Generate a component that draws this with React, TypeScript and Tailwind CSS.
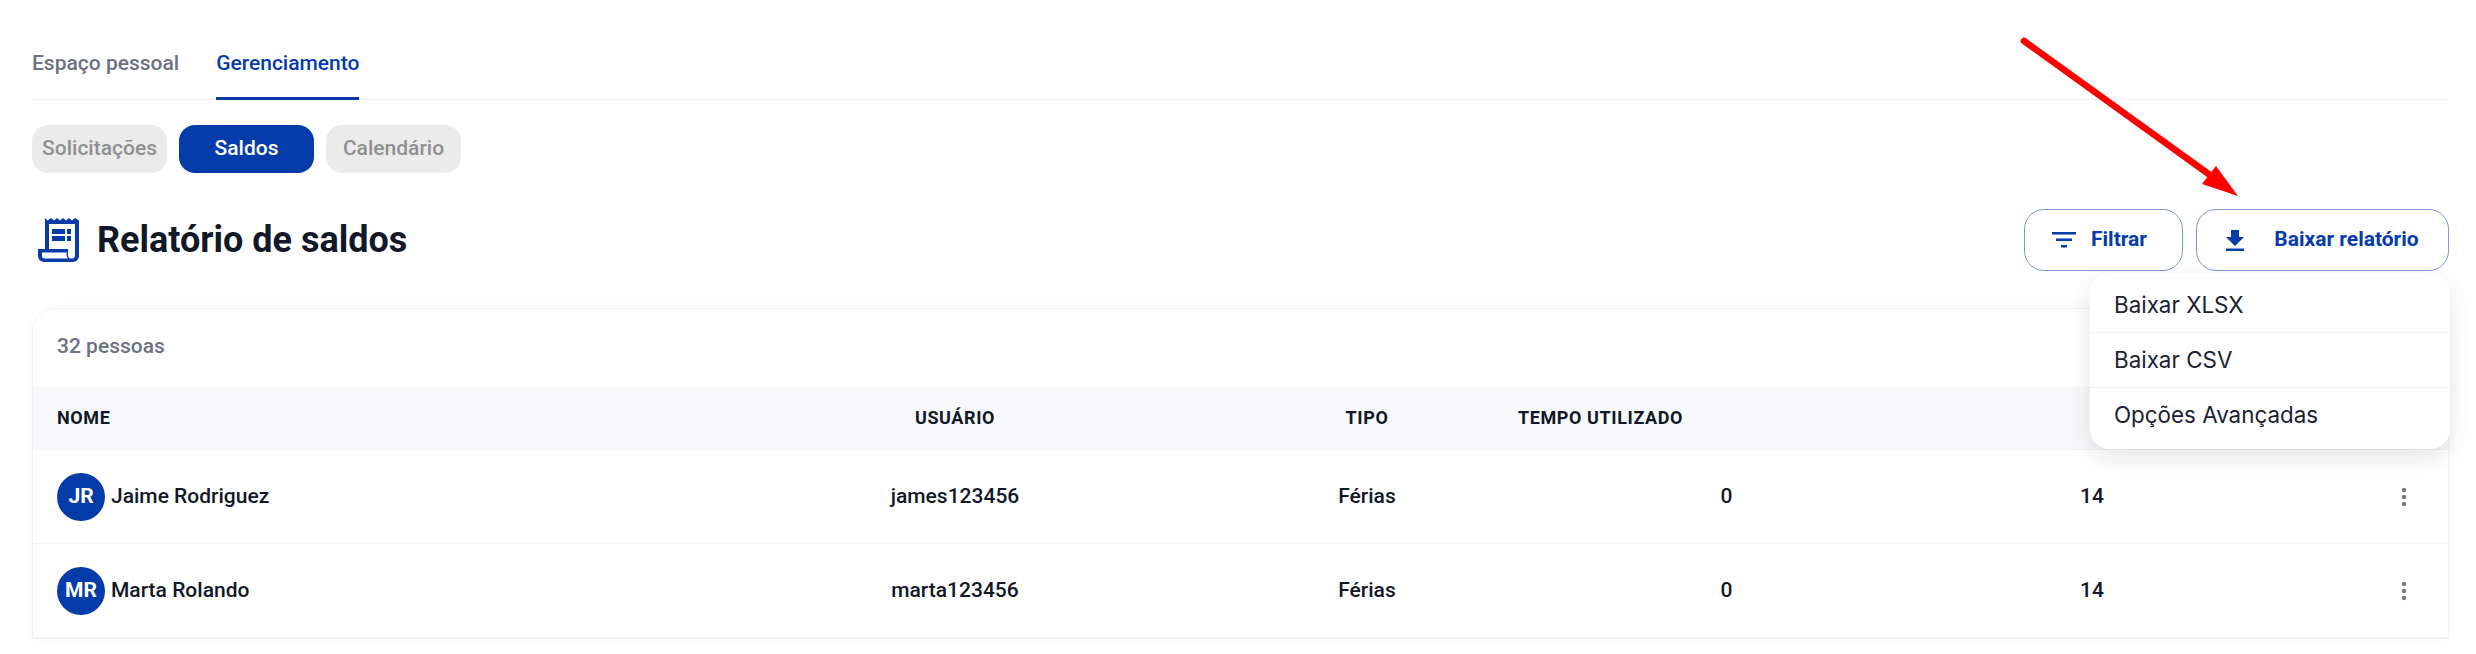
import { MoreVertical } from "lucide-react";

const rows = [
  { initials: "JR", name: "Jaime Rodriguez", user: "james123456", type: "Férias", used: "0", balance: "14" },
  { initials: "MR", name: "Marta Rolando", user: "marta123456", type: "Férias", used: "0", balance: "14" },
];

const gridCols = "grid grid-cols-[667px_510px_308px_414px_320px_1fr] items-center";

function ReportIcon() {
  return (
    <svg viewBox="0 0 41 44" className="w-[41px] h-11 text-[#063baa]" fill="currentColor">
      <path
        fillRule="evenodd"
        d="M7 0l2.700 2.500L13 0l3 2.500L19 0l3 2.500L25 0l3 2.500L31 0l3 2.500L37 0l4 2.500V38a6 6 0 0 1-6 6H6a6 6 0 0 1-6-6v-7h7V0zm4 6v25h19v7a3 3 0 0 0 3 2.500h1a3 3 0 0 0 3-2.500V6H11zM4 34.500V38a2.500 2.500 0 0 0 2.500 2.500H30a6 6 0 0 1-1-6H4z"
      />
      <rect x="14" y="11" width="13" height="5" />
      <rect x="29" y="11" width="4" height="5" />
      <rect x="14" y="18" width="13" height="5" />
      <rect x="29" y="18" width="4" height="5" />
    </svg>
  );
}

export default function App() {
  return (
    <div className="relative h-[654px] overflow-hidden bg-white font-['Roboto',sans-serif] text-[#111827]">
      <div className="pl-8 pr-[27px] pt-[40px]">
        <div className="flex gap-[37px] h-[60px] border-b border-[#f1f3f7]">
          <span className="text-[21px] leading-[46px] font-medium text-[#6b7280]">Espaço pessoal</span>
          <span className="text-[21px] leading-[46px] font-medium text-[#063baa] border-b-[3px] border-[#063baa] h-[60px]">Gerenciamento</span>
        </div>

        <div className="flex gap-3 mt-[25px]">
          <button className="w-[135px] h-12 pb-[1px] rounded-2xl bg-[#ebebeb] text-[21px] font-medium text-[#8f8f8f]">Solicitações</button>
          <button className="w-[135px] h-12 pb-[1px] rounded-2xl bg-[#063baa] text-[21px] font-medium text-white">Saldos</button>
          <button className="w-[135px] h-12 pb-[1px] rounded-2xl bg-[#ebebeb] text-[21px] font-medium text-[#8f8f8f]">Calendário</button>
        </div>

        <div className="flex items-center justify-between mt-[36px] h-[62px]">
          <div className="flex items-center gap-[18px] pl-[6px]">
            <ReportIcon />
            <h1 className="text-[36px] font-bold leading-none">Relatório de saldos</h1>
          </div>
          <div className="flex gap-[13px]">
            <button className="flex items-center gap-[15px] pl-[27px] w-[159px] h-[62px] rounded-[20px] border border-[#7f96d8] text-[21px] font-bold text-[#063baa]">
              <svg viewBox="0 0 24 16" className="w-6 h-4" fill="currentColor">
                <rect x="0" y="0" width="24" height="2.500" />
                <rect x="4" y="6.500" width="16" height="2.500" />
                <rect x="9" y="13" width="6" height="2.500" />
              </svg>
              Filtrar
            </button>
            <button className="flex items-center justify-center gap-[30px] w-[253px] h-[62px] rounded-[20px] border border-[#7f96d8] text-[21px] font-bold text-[#063baa]">
              <svg viewBox="0 0 18 21" className="w-[18px] h-[21px]" fill="currentColor">
                <path d="M5 0h8v7h5l-9 9-9-9h5z" />
                <rect x="0" y="18.500" width="18" height="2.500" />
              </svg>
              Baixar relatório
            </button>
          </div>
        </div>

        <div className="mt-[37px] rounded-t-[24px] border border-[#f1f2f5] shadow-[0_0_14px_rgba(0,0,0,0.03)]">
          <div className="h-[78px] pb-[3px] flex items-center px-6 text-[21px] font-medium text-[#6b7280]">32 pessoas</div>
          <div className={`${gridCols} h-[63px] pb-[1px] bg-[#f7f8fa] border-b border-[#f1f3f7] text-[18px] font-bold tracking-[0.6px]`}>
            <span className="pl-6">NOME</span>
            <span className="text-center">USUÁRIO</span>
            <span className="text-center pl-[6px]">TIPO</span>
            <span>TEMPO UTILIZADO</span>
            <span></span>
            <span></span>
          </div>
          {rows.map((row) => (
            <div key={row.user} className={`${gridCols} h-[94px] border-b border-[#f1f3f7] text-[21px] font-medium`}>
              <div className="flex items-center gap-[6px] pl-6">
                <span className="flex items-center justify-center size-12 rounded-full bg-[#063baa] text-white font-bold">{row.initials}</span>
                {row.name}
              </div>
              <span className="text-center">{row.user}</span>
              <span className="text-center pl-[6px]">{row.type}</span>
              <span className="text-center pl-[3px]">{row.used}</span>
              <span className="text-center">{row.balance}</span>
              <div className="flex justify-end pr-[32px]">
                <MoreVertical className="size-6 text-[#7a7a7a]" strokeWidth={2.500} />
              </div>
            </div>
          ))}
        </div>
      </div>

      <div className="absolute left-[2090px] top-[273px] w-[360px] rounded-[20px] bg-white font-['Inter',sans-serif] text-[22.4px] text-[#1a2233] shadow-[0_8px_24px_rgba(0,0,0,0.1)]">
        <div className="h-[60px] pt-[4px] flex items-center px-[24px] border-b border-[#f1f3f7]">Baixar XLSX</div>
        <div className="h-[55px] flex items-center px-[24px] border-b border-[#f1f3f7]">Baixar CSV</div>
        <div className="h-[61px] pb-[7px] flex items-center px-[24px]">Opções Avançadas</div>
      </div>

      <svg className="absolute left-0 top-0 pointer-events-none" width="2476" height="654">
        <path d="M2024 41L2210 175" stroke="#ff0000" strokeWidth="6.500" strokeLinecap="round" fill="none" />
        <path d="M2216 166L2238 196L2202 184z" fill="#ff0000" />
      </svg>
    </div>
  );
}
